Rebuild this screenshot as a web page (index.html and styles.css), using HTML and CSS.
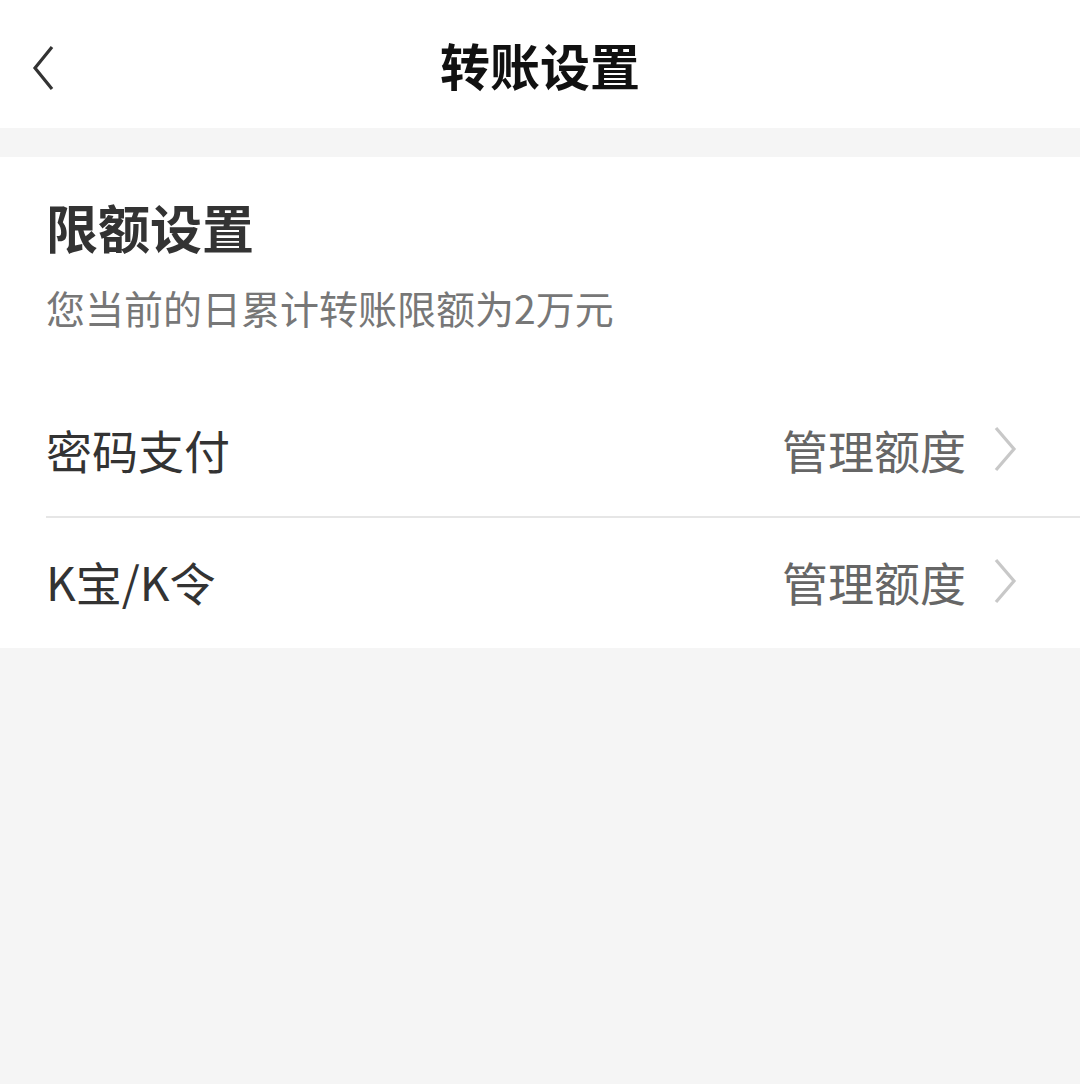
FILE: index.html
```html
<!DOCTYPE html>
<html lang="zh-CN">

<head>
    <meta charset="UTF-8">
    <meta name="viewport" content="width=device-width, initial-scale=1.0">
    <title>转账设置</title>
    <link rel="stylesheet" href="styles.css">
</head>

<body>
    <div class="topbar">
        <span class="back">
            <svg width="24" height="46" viewBox="0 0 24 46">
                <polyline points="20,2 3,23 20,44" fill="none" stroke="#333" stroke-width="3.2" stroke-linejoin="miter" />
            </svg>
        </span>
        <h1 class="title">转账设置</h1>
    </div>

    <div class="card">
        <h2 class="heading">限额设置</h2>
        <p class="desc">您当前的日累计转账限额为2万元</p>

        <div class="row">
            <span class="label">密码支付</span>
            <span class="action">管理额度
                <svg class="arrow" width="26" height="46" viewBox="0 0 26 46">
                    <polyline points="4,2 22,23 4,44" fill="none" stroke="#c8c8c8" stroke-width="3.2" />
                </svg>
            </span>
        </div>
        <div class="row">
            <span class="label">K宝/K令</span>
            <span class="action">管理额度
                <svg class="arrow" width="26" height="46" viewBox="0 0 26 46">
                    <polyline points="4,2 22,23 4,44" fill="none" stroke="#c8c8c8" stroke-width="3.2" />
                </svg>
            </span>
        </div>
    </div>
</body>

</html>
```

FILE: styles.css
```css
html, body {
    margin: 0;
    padding: 0;
    height: 100%;
    background-color: #f5f5f5;
    font-family: "Noto Sans CJK SC", "Noto Sans", sans-serif;
}

.topbar {
    height: 128px;
    background-color: #fff;
    display: flex;
    align-items: center;
    justify-content: center;
    position: relative;
    margin-bottom: 29px;
}

.back {
    position: absolute;
    left: 32px;
    top: 45px;
    display: flex;
}

.title {
    margin: 0;
    font-size: 50px;
    font-weight: bold;
    color: #111;
    line-height: 60px;
}

.card {
    background-color: #fff;
    padding-top: 40px;
}

.heading {
    margin: 0 46px;
    font-size: 52px;
    font-weight: bold;
    color: #333;
    line-height: 60px;
}

.desc {
    margin: 25px 46px 54px;
    font-size: 39px;
    color: #777;
    line-height: 50px;
}

.row {
    margin-left: 46px;
    padding-right: 62px;
    padding-bottom: 5px;
    height: 125px;
    display: flex;
    align-items: center;
    justify-content: space-between;
}

.row + .row {
    border-top: 2px solid #e6e6e6;
}

.label {
    font-size: 46px;
    color: #333;
}

.action {
    font-size: 46px;
    color: #666;
    display: flex;
    align-items: center;
    gap: 26px;
}
```
